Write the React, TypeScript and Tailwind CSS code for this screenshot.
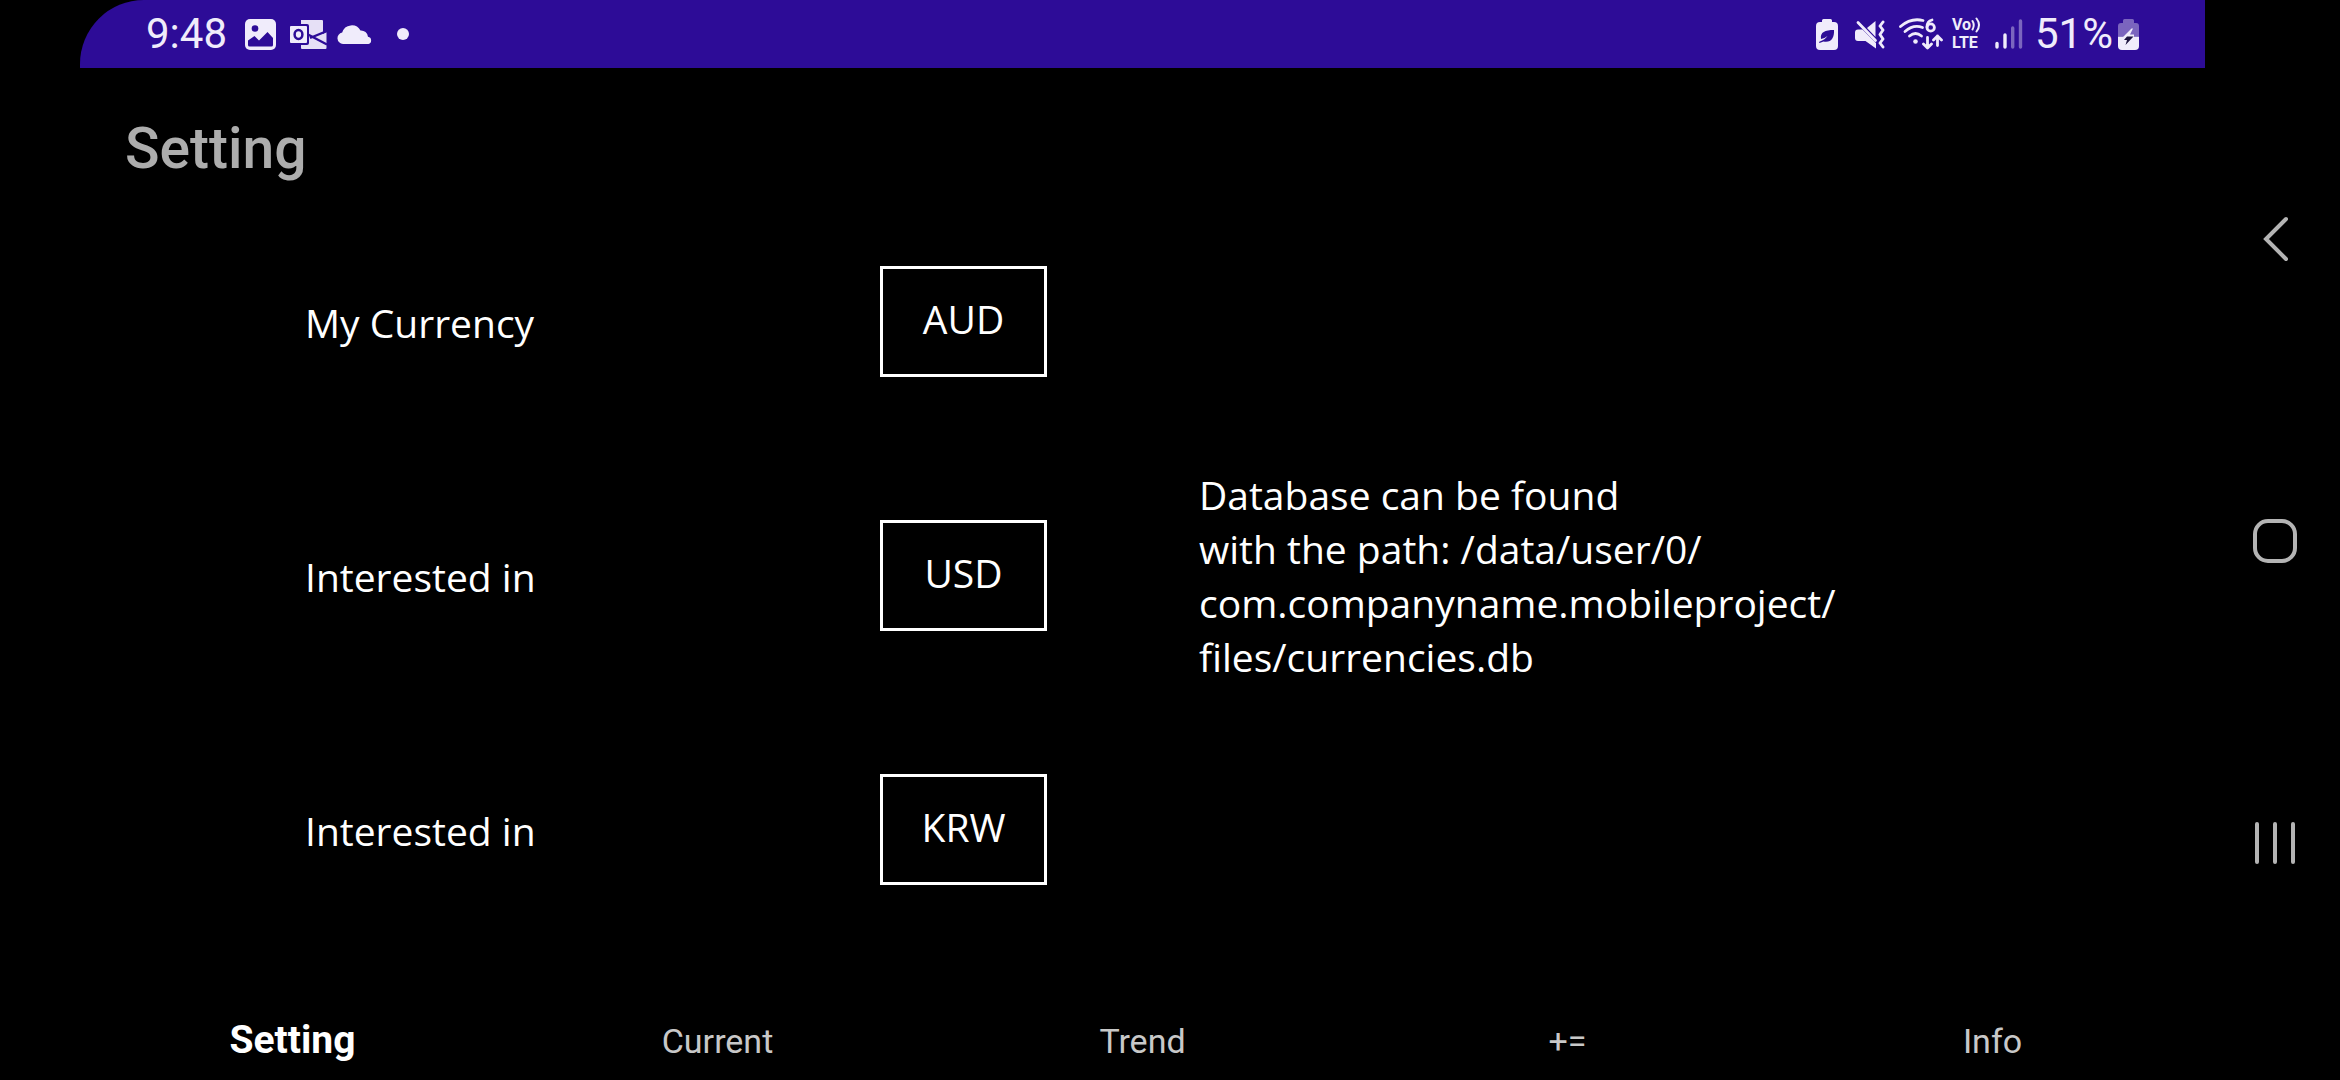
import React from "react";

const ink = "#f0ecfb";
const bar = "#2d0c97";

function ImageIcon() {
  return (
    <svg width="31" height="31" viewBox="0 0 31 31" aria-hidden="true">
      <rect width="31" height="31" rx="5" fill={ink} />
      <circle cx="10" cy="9.5" r="3.3" fill={bar} />
      <path d="M3 21.500 9.500 17l4.500 4.500 8.500-8.500 5.500 6V26q0 1.500-1.500 1.500h-22Q3 27.500 3 26Z" fill={bar} />
    </svg>
  );
}

function OutlookIcon() {
  return (
    <svg width="37" height="29" viewBox="0 0 37 29" aria-hidden="true">
      <path d="M11 0h21q1 0 1 1v13l3.500-2.500V28q0 1-1 1H12q-1 0-1-1Z" fill={ink} opacity="0.95" />
      <path d="M18 14.500 37 24.500" stroke={bar} strokeWidth="2.400" />
      <path d="M20 18 37 11" stroke={bar} strokeWidth="2.400" />
      <path d="M33 0h4v11l-4 2Z" fill={bar} />
      <rect x="-1" y="4" width="20" height="21" rx="2" fill={bar} />
      <rect x="0" y="6" width="17" height="17" rx="1" fill={ink} />
      <ellipse cx="8.500" cy="14.500" rx="3.900" ry="4.400" fill="none" stroke={bar} strokeWidth="2.500" />
    </svg>
  );
}

function CloudIcon() {
  return (
    <svg width="36" height="20" viewBox="0 0 36 20" aria-hidden="true">
      <path d="M6 20a5.800 5.800 0 0 1-.8-11.500A10 10 0 0 1 23.500 6.500 7 7 0 0 1 31 12.800 3.700 3.700 0 0 1 31.500 20Z" fill={ink} />
    </svg>
  );
}

function BatteryLeafIcon() {
  return (
    <svg width="22" height="31" viewBox="0 0 22 31" aria-hidden="true">
      <path d="M6 3V1.500Q6 0 7.500 0h7Q16 0 16 1.500V3h2q4 0 4 4v20q0 4-4 4H4q-4 0-4-4V7q0-4 4-4Z" fill={ink} />
      <path d="M5 20c-1-7 4-9 13-9 .5 8-3 13-10.500 11.500L3.500 24c-.8-.8-.2-1.400 1-1.800 3-1 5-2.700 7-5.200-2 1.500-4 2.500-6.500 3Z" fill={bar} />
    </svg>
  );
}

function MuteVibrateIcon() {
  return (
    <svg width="30" height="29" viewBox="0 0 30 29" aria-hidden="true">
      <path d="M20.500 1v16L12 8Z" fill={ink} />
      <path d="M3 9.500h4.500L21 23v5.500L10.500 21H3Q0 21 0 18v-5.500Q0 9.500 3 9.500Z" fill={ink} />
      <path d="m3 2.500 17.500 18" stroke={ink} strokeWidth="2.800" strokeLinecap="round" />
      <path d="m28 2-3 4 3 4-3 4.500 3 4.500-3 4 3 4" fill="none" stroke={ink} strokeWidth="2.900" strokeLinecap="round" strokeLinejoin="round" />
    </svg>
  );
}

function WifiIcon() {
  return (
    <svg width="44" height="32" viewBox="0 0 44 32" aria-hidden="true">
      <g fill="none" stroke={ink} strokeWidth="2.800" strokeLinecap="round" strokeLinejoin="round">
        <path d="M1.500 8.500Q12-.5 24 2.500" />
        <path d="M6 13.500Q14.500 6 23.500 9.500" />
        <path d="M10.500 18q6-5 12 0" />
        <path d="M33 2q-5 1-5 7" />
        <circle cx="31.700" cy="9.500" r="3.700" />
        <path d="M28.500 19.500V30m-4-4 4 4 4-4M38.500 27.500V18m-4 4 4-4 4 4" />
      </g>
      <circle cx="16.500" cy="23.500" r="2.300" fill={ink} />
    </svg>
  );
}

function VolteIcon() {
  return (
    <span className="flex w-[31px] flex-col font-['Roboto'] text-[16px] leading-[18px] font-bold text-[#f0ecfb]">
      <span className="flex items-center">
        Vo
        <svg width="10" height="16" viewBox="0 0 10 16" aria-hidden="true">
          <path d="M1.500 4q2.500 4 0 8.500M5.500 1.500q5 6.500 0 13" fill="none" stroke={ink} strokeWidth="2" strokeLinecap="round" />
        </svg>
      </span>
      <span>LTE</span>
    </span>
  );
}

function SignalIcon() {
  return (
    <svg width="28" height="30" viewBox="0 0 28 30" aria-hidden="true">
      <g stroke={ink} strokeWidth="3.400" strokeLinecap="round">
        <path d="M2 24.500V28M10 16v12" />
        <path d="M17.700 9v19M25.500 2v26" opacity="0.4" />
      </g>
    </svg>
  );
}

function ChargingIcon() {
  return (
    <svg width="21" height="31" viewBox="0 0 21 31" aria-hidden="true">
      <path d="M5 4V1.500Q5 0 6.500 0h8Q16 0 16 1.500V4h2q3 0 3 3v10H0V7q0-3 3-3Z" fill={ink} opacity="0.4" />
      <path d="M0 17.500h21V27q0 4-4 4H4q-4 0-4-4Z" fill={ink} />
      <path d="M13.500 9.500 5 18h11v-2.500h-4l3-6Z" fill={ink} />
      <path d="M9 17.500h6.500L7.500 26l1.500-5H6Z" fill="#1d1440" />
    </svg>
  );
}

function StatusBar() {
  return (
    <header className="flex h-17 items-center justify-between rounded-tl-[64px] bg-[#2d0c97] px-[66px] font-['Roboto'] text-[#f0ecfb]">
      <div className="flex items-center">
        <time className="w-[99px] text-[42px] leading-none">9:48</time>
        <div className="flex items-center">
          <span className="w-[45px]"><ImageIcon /></span>
          <span className="w-[47px]"><OutlookIcon /></span>
          <span className="w-[60px]"><CloudIcon /></span>
          <span className="h-3 w-3 rounded-full bg-[#f0ecfb]" />
        </div>
      </div>
      <div className="flex items-center">
        <span className="w-[39px]"><BatteryLeafIcon /></span>
        <span className="w-[44px]"><MuteVibrateIcon /></span>
        <span className="w-[53px]"><WifiIcon /></span>
        <span className="w-[43px]"><VolteIcon /></span>
        <span className="w-[40px]"><SignalIcon /></span>
        <span className="w-[83px] text-[42px] leading-none">51%</span>
        <ChargingIcon />
      </div>
    </header>
  );
}

const currencies = [
  { id: "mine", label: "My Currency", code: "AUD" },
  { id: "first", label: "Interested in", code: "USD" },
  { id: "second", label: "Interested in", code: "KRW" },
];

const tabs = ["Setting", "Current", "Trend", "+=", "Info"];

function SystemNav() {
  return (
    <nav aria-label="System" className="flex w-[135px] shrink-0 flex-col items-center pt-[88px] pb-[86px] pl-[4px]">
      <button type="button" aria-label="Back" className="flex flex-1 items-center">
        <svg width="28" height="48" viewBox="0 0 28 48" aria-hidden="true">
          <path d="M25 4 5 24l20 20" fill="none" stroke="#b4b4b4" strokeWidth="4" strokeLinecap="round" />
        </svg>
      </button>
      <button type="button" aria-label="Home" className="flex flex-1 items-center">
        <svg width="44" height="44" viewBox="0 0 44 44" aria-hidden="true">
          <rect x="2" y="2" width="40" height="40" rx="13" fill="none" stroke="#b4b4b4" strokeWidth="4" />
        </svg>
      </button>
      <button type="button" aria-label="Recent apps" className="flex flex-1 items-center">
        <svg width="40" height="42" viewBox="0 0 40 42" aria-hidden="true">
          <path d="M2 2v38M20 2v38M38 2v38" stroke="#b4b4b4" strokeWidth="4" strokeLinecap="round" />
        </svg>
      </button>
    </nav>
  );
}

export default function App() {
  return (
    <div className="flex min-h-screen bg-black pl-20 text-white">
      <div className="flex min-w-0 flex-1 flex-col">
        <StatusBar />
        <h1 className="px-[45px] pt-12 font-['Roboto'] text-[57px] leading-[66px] font-medium text-[#adadad]">Setting</h1>
        <main className="grid flex-1 grid-cols-[1096fr_1029fr] items-center pb-8 font-['Open_Sans'] text-[39px] leading-[54px]">
          <form className="flex flex-col gap-[143px] pl-[225px]">
            {currencies.map((c) => (
              <div key={c.id} className="flex items-center">
                <label htmlFor={c.id} className="w-[575px] pt-1">{c.label}</label>
                <button id={c.id} type="button" className="h-[111px] w-[167px] border-3 border-white pb-1">
                  {c.code}
                </button>
              </div>
            ))}
          </form>
          <p className="pt-[2px] pl-[23px]">
            Database can be found
            <br />
            with the path: /data/user/0/
            <br />
            com.companyname.mobileproject/
            <br />
            files/currencies.db
          </p>
        </main>
        <nav aria-label="Sections" className="grid h-20 grid-cols-5 items-baseline pt-4 font-['Roboto'] text-[34px] leading-12 text-[#c8c8c8]">
          {tabs.map((t) => (
            <a
              key={t}
              href="#"
              aria-current={t === "Setting" ? "page" : undefined}
              className="text-center aria-[current=page]:text-[39px] aria-[current=page]:font-bold aria-[current=page]:text-white"
            >
              {t}
            </a>
          ))}
        </nav>
      </div>
      <SystemNav />
    </div>
  );
}
